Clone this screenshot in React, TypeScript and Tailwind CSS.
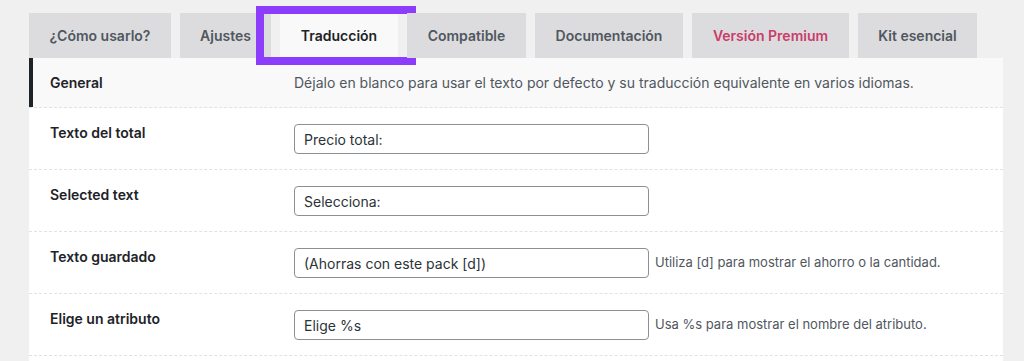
const tabs = [
  { label: "¿Cómo usarlo?", w: "w-[142px]" },
  { label: "Ajustes", w: "w-[91px]" },
  { label: "Traducción", w: "w-[118px]", active: true },
  { label: "Compatible", w: "w-[119px]" },
  { label: "Documentación", w: "w-[148px]" },
  { label: "Versión Premium", w: "w-[157px]", premium: true },
  { label: "Kit esencial", w: "w-[119px]" },
];

const fields = [
  { label: "Texto del total", value: "Precio total:" },
  { label: "Selected text", value: "Selecciona:" },
  {
    label: "Texto guardado",
    value: "(Ahorras con este pack [d])",
    help: "Utiliza [d] para mostrar el ahorro o la cantidad.",
  },
  {
    label: "Elige un atributo",
    value: "Elige %s",
    help: "Usa %s para mostrar el nombre del atributo.",
  },
];

export default function App() {
  return (
    <div
      className="w-[1024px] h-[361px] overflow-hidden bg-[#f0f0f1] pt-[13px] pl-[29px]"
      style={{ fontFamily: "Inter, 'Liberation Sans', sans-serif" }}
    >
      {/* tabs */}
      <div className="flex gap-[9px] h-[45px]">
        {tabs.map((tab) => (
          <div
            key={tab.label}
            className={`relative ${tab.w} h-full flex items-center justify-center text-[14px] font-semibold ${
              tab.active
                ? "bg-[#f9f9f9] text-[#1d2327]"
                : tab.premium
                ? "bg-[#dcdcde] text-[#c93c6c]"
                : "bg-[#dcdcde] text-[#50575e]"
            }`}
          >
            {tab.label}
            {tab.active && (
              <div className="absolute left-[-24px] right-[-18px] top-[-7px] bottom-[-7px] border-[8px] border-[#8b3dfb]" />
            )}
          </div>
        ))}
      </div>

      {/* panel */}
      <div className="w-[974px] bg-white">
        <div className="flex h-[50px] bg-[#f9f9f9] border-b border-dashed border-[#e2e2e4]">
          <div className="w-[4px] self-stretch bg-[#1d2327]" />
          <div className="w-[261px] pl-[17px] pt-[16px] text-[14px] font-semibold text-[#1d2327] leading-[18px]">
            General
          </div>
          <div className="pt-[16px] text-[14px] text-[#50575e] leading-[18px]">
            Déjalo en blanco para usar el texto por defecto y su traducción equivalente en varios idiomas.
          </div>
        </div>

        {fields.map((f) => (
          <div
            key={f.label}
            className="flex h-[62px] border-b border-dashed border-[#e2e2e4]"
          >
            <div className="w-[265px] pl-[21px] pt-[16px] text-[14px] font-semibold text-[#1d2327] leading-[18px]">
              {f.label}
            </div>
            <div className="flex items-center h-[30px] mt-[16px]">
              <div className="w-[355px] h-[30px] flex items-center rounded-[4px] border border-[#8c8f94] bg-white pl-[9px] text-[14px] text-[#2c3338]">
                {f.value}
              </div>
              {f.help && (
                <span className="ml-[6px] text-[13px] text-[#50575e]">{f.help}</span>
              )}
            </div>
          </div>
        ))}
        <div className="h-[20px]" />
      </div>
    </div>
  );
}
